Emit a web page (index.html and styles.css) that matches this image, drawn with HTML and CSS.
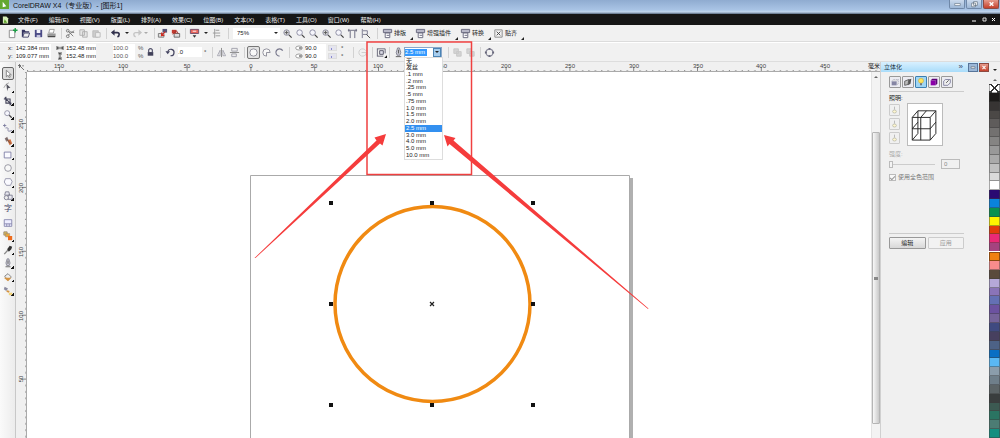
FILE: index.html
```html
<!DOCTYPE html>
<html lang="zh-CN">
<head>
<meta charset="utf-8">
<title>CorelDRAW X4（专业版）- [图形1]</title>
<link rel="stylesheet" href="styles.css">
</head>
<body>
<svg class="defs" aria-hidden="true">
  <symbol id="new" viewBox="0 0 12 12"><path d="M2.500 2.500h6v8h-6z" fill="#fff" stroke="#888" /><path d="M9 0v5M6.500 2.500h5" stroke="#1ba045" stroke-width="1.500"/></symbol>
  <symbol id="open" viewBox="0 0 12 12"><path d="M2 10V2h3l1 1.500h4V5H4L3 9.500z" fill="#353560"/><path d="M4.500 5.500h6l-1.500 4.500H3z" fill="#eee" stroke="#353560" stroke-width=".9"/></symbol>
  <symbol id="save" viewBox="0 0 12 12"><path d="M2 2h8v8H2z" fill="#4b4b86"/><path d="M4 2h4v3.500H4z" fill="#f4f4fa"/><path d="M4 7.500h4V10H4z" fill="#c5c5de"/></symbol>
  <symbol id="print" viewBox="0 0 12 12"><path d="M4 1.500h5l-1 4H3z" fill="#fff" stroke="#777" stroke-width=".7"/><path d="M1.500 6h9v3.500h-9z" fill="#999"/><path d="M2 9.500h8" stroke="#222"/></symbol>
  <symbol id="cut" viewBox="0 0 12 12"><path d="M3 3l6 6M3 8l7-5M5 4l5 1" stroke="#777"/><circle cx="3" cy="3" r="1.500" fill="none" stroke="#777"/><circle cx="3" cy="9" r="1.500" fill="none" stroke="#777"/></symbol>
  <symbol id="copy" viewBox="0 0 12 12"><path d="M2 2h5v6H2zM5 4h5v6H5z" fill="#e6e6e6" stroke="#aaa" stroke-width=".9"/></symbol>
  <symbol id="paste" viewBox="0 0 12 12"><path d="M2 3h6v7H2z" fill="#ccc" stroke="#bbb"/><path d="M5 5h5v5H5z" fill="#eee" stroke="#bbb"/></symbol>
  <symbol id="undo" viewBox="0 0 12 12"><path d="M3 5h5q2 0 2 2t-2 2.500" fill="none" stroke="#32324d" stroke-width="1.800"/><path d="M1 5l4-3.500v7z" fill="#32324d"/></symbol>
  <symbol id="redo" viewBox="0 0 12 12"><path d="M9 5H4Q2 5 2 7t2 2.500" fill="none" stroke="#c5c5c5" stroke-width="1.500"/><path d="M11 5L7 1.500v7z" fill="#c5c5c5"/></symbol>
  <symbol id="import" viewBox="0 0 12 12"><path d="M1.500 6h6v4h-6z" fill="#ddd" stroke="#777"/><path d="M6 1h5v4H6z" fill="#555577"/><path d="M9 4L5 8V5M5 8h3" stroke="#d02b22" stroke-width="1.300" fill="none"/></symbol>
  <symbol id="export" viewBox="0 0 12 12"><path d="M4.500 6h6v4h-6z" fill="#ddd" stroke="#666"/><path d="M2 2h5v4H2z" fill="#c03b30"/><path d="M3 7L7 3l2 3" stroke="#a32d28" fill="none"/></symbol>
  <symbol id="launch" viewBox="0 0 12 12"><path d="M1.500 1.500h9V6h-9z" fill="#e4635a" stroke="#6f4f6b"/><path d="M4 3.500h4" stroke="#fff"/><path d="M4 8h4l-2 2.500z" fill="#333"/></symbol>
  <symbol id="align" viewBox="0 0 12 12"><path d="M4 1v10M5 2.500h4M2 5.500h8M5 8.500h5" stroke="#999"/></symbol>
  <symbol id="mag" viewBox="0 0 12 12"><circle cx="5" cy="5" r="3" fill="#f6f6fc" stroke="#8a8aa0"/><path d="M7.500 7.500l3 3" stroke="#444" stroke-width="1.400"/></symbol>
  <symbol id="magplus" viewBox="0 0 12 12"><circle cx="5" cy="5" r="3" fill="#ddd" stroke="#8a8aa0"/><path d="M3 5h4M5 3v4" stroke="#555"/><path d="M7.500 7.500l3 3" stroke="#444" stroke-width="1.400"/></symbol>
  <symbol id="zpage" viewBox="0 0 12 12"><path d="M3.500 3v8M8.500 3v8M1 2.500h10" stroke="#66667c"/><path d="M2 1v3M10 1v3" stroke="#66667c"/></symbol>
  <symbol id="zwidth" viewBox="0 0 12 12"><path d="M2.500 1v10M3 3h5v4H3" fill="none" stroke="#77778c"/><path d="M7 7l4 4" stroke="#444"/></symbol>
  <symbol id="macro" viewBox="0 0 12 12"><path d="M1.500 1.500h9V5h-9z" fill="#b8b8c8" stroke="#66667c"/><path d="M3.500 5.500h5v5h-5z" fill="#fff" stroke="#66667c"/><path d="M5 8h3" stroke="#66667c"/></symbol>
  <symbol id="snap" viewBox="0 0 12 12"><path d="M2 2h8v8H2z" fill="none" stroke="#888"/><path d="M4 4l4 4M8 4L4 8" stroke="#444"/></symbol>
  <symbol id="hsize" viewBox="0 0 12 12"><path d="M1.500 3v6M10.500 3v6M2 6h8M4 4L2 6l2 2M8 4l2 2-2 2" fill="none" stroke="#333" stroke-width="1.300"/></symbol>
  <symbol id="vsize" viewBox="0 0 12 12"><path d="M3 1.500h6M3 10.500h6M6 2v8M4 4l2-2 2 2M4 8l2 2 2-2" fill="none" stroke="#333" stroke-width="1.300"/></symbol>
  <symbol id="lock" viewBox="0 0 12 12"><path d="M3 5.500h6v4H3z" fill="#42425a"/><path d="M4 6V3q2-2.500 4 0v3" fill="none" stroke="#55556e" stroke-width="1.300"/></symbol>
  <symbol id="rotate" viewBox="0 0 12 12"><path d="M3 5a3.500 3.500 0 1 1 3 4.500" fill="none" stroke="#444460" stroke-width="1.300"/><path d="M.5 4.500h5L3 8z" fill="#444460"/></symbol>
  <symbol id="mirrh" viewBox="0 0 12 12"><path d="M1.500 9.500l3-6v6zM10.500 9.500l-3-6v6z" fill="#eee" stroke="#a8a8b4"/><path d="M6 1v10" stroke="#888"/></symbol>
  <symbol id="mirrv" viewBox="0 0 12 12"><path d="M3 1.500h6v3H3zM3 7.500h5v3H3z" fill="#eee" stroke="#a0a0ac"/><path d="M1 6h10" stroke="#888"/></symbol>
  <symbol id="ring" viewBox="0 0 12 12"><circle cx="6" cy="6" r="4" fill="#f8f8f8" stroke="#8c8c98"/></symbol>
  <symbol id="pie" viewBox="0 0 12 12"><path d="M6 6h4a4 4 0 1 0-4 4z" fill="#f8f8f8" stroke="#8c8c98"/></symbol>
  <symbol id="arc" viewBox="0 0 12 12"><path d="M9.500 4a4 4 0 1 0-3.500 6" fill="none" stroke="#77778c" stroke-width="1.300"/></symbol>
  <symbol id="angle" viewBox="0 0 12 12"><ellipse cx="6" cy="6" rx="5" ry="3" fill="#fff" stroke="#777"/><path d="M6 6h4" stroke="#333" stroke-width="1.500"/></symbol>
  <symbol id="swap" viewBox="0 0 12 12"><path d="M9.500 4a4 4 0 1 0 0 4" fill="none" stroke="#ccc"/><path d="M5 6h5v4" fill="none" stroke="#ccc"/></symbol>
  <symbol id="wrap" viewBox="0 0 12 12"><path d="M1 2h9M1 10h7M1.500 2v8M10 2v5" stroke="#667"/><path d="M4 4h4v4H4z" fill="#dcdce8" stroke="#556"/><path d="M12 9v3H9z" fill="#111"/></symbol>
  <symbol id="pen" viewBox="0 0 12 12"><path d="M5 1h2l1.500 5-1 3h-3l-1-3z" fill="#c9c9d2" stroke="#777788" stroke-width=".9"/><path d="M3 10.500h6M6 3v4" stroke="#555"/></symbol>
  <symbol id="order" viewBox="0 0 12 12"><path d="M2 2h5v5H2zM5 5h5v5H5z" fill="#d4d4d4" stroke="#c8c8c8"/></symbol>
  <symbol id="curve" viewBox="0 0 12 12"><circle cx="6" cy="6" r="3.800" fill="none" stroke="#88889a" stroke-width="1.400"/><path d="M5 1h2v2H5zM5 9h2v2H5zM1 5h2v2H1zM9 5h2v2H9z" fill="#666679"/></symbol>
  <symbol id="pick" viewBox="0 0 12 12"><path d="M4 1.500v8l2-2 1.500 3 1.300-.8L7.300 7H10z" fill="#fff" stroke="#777"/></symbol>
  <symbol id="shape" viewBox="0 0 12 12"><path d="M1 7q2-5 6-6" fill="none" stroke="#999"/><path d="M4 2l5 5-3 .5L5 11z" fill="#55555f"/></symbol>
  <symbol id="crop" viewBox="0 0 12 12"><path d="M3.500 1v7.500H10M1 3.500h7.500V11M2 2l8 8" fill="none" stroke="#44445a" stroke-width="1.300"/></symbol>
  <symbol id="free" viewBox="0 0 12 12"><path d="M2 1v4M0 3h4M3 6q4-1 3 2t5 1" fill="none" stroke="#77779a"/></symbol>
  <symbol id="smart" viewBox="0 0 12 12"><path d="M2 3l3-2 2 4-3 2z" fill="#8a7777"/><path d="M5 5l4-1 2 5-3 2z" fill="#d06c3c"/><path d="M4 3l5 6" stroke="#555"/></symbol>
  <symbol id="rect" viewBox="0 0 12 12"><path d="M1.500 2.500h8v7h-8z" fill="#fafaff" stroke="#7777a0"/></symbol>
  <symbol id="poly" viewBox="0 0 12 12"><path d="M3 2h6l2 3.500L9 10H4L1.500 6z" fill="#fafaff" stroke="#8d8da5"/></symbol>
  <symbol id="shapes" viewBox="0 0 12 12"><path d="M3 1h4l1 4H2zM6 5h5v5H6z" fill="#e8e8f0" stroke="#77778c"/><circle cx="4" cy="8" r="2.500" fill="#eee" stroke="#77778c"/></symbol>
  <symbol id="table" viewBox="0 0 12 12"><path d="M1.500 2h9v8h-9z" fill="#eef" stroke="#8080a8"/><path d="M1.500 7h9M4.500 7v3M7.500 7v3" stroke="#8080a8"/></symbol>
  <symbol id="blend" viewBox="0 0 12 12"><path d="M1 1h4v4H1z" fill="#d8bd54" stroke="#987"/><path d="M3 3h5v4H3z" fill="#e5a53d" stroke="#987" stroke-width=".6"/><path d="M6 6h5v5H6z" fill="#ee6c1e"/></symbol>
  <symbol id="drop" viewBox="0 0 12 12"><path d="M1.500 11L6 6" stroke="#888" stroke-width="1.500"/><path d="M5 5l3-4 3 1-1 3-3 3z" fill="#333"/></symbol>
  <symbol id="fill" viewBox="0 0 12 12"><path d="M2 5l4-3 4 4-4 4z" fill="#eee" stroke="#777"/><path d="M1 7h9l-4 4z" fill="#d59442"/></symbol>
  <symbol id="ifill" viewBox="0 0 12 12"><path d="M2 1l4 2-2 3-3-2z" fill="#8c8ca0"/><path d="M5 5l3 1-1 2-3-1z" fill="#d59442"/><path d="M7 8h4v3H7z" fill="#f1d37b"/></symbol>
  <symbol id="cubeflat" viewBox="0 0 12 12"><path d="M2 5h6v5H2z" fill="#8585a3"/><path d="M2 5l2-2h6L8 5M10 3v5l-2 2" fill="#ddd" stroke="#a8a8ba" stroke-dasharray="1 1"/></symbol>
  <symbol id="cuberot" viewBox="0 0 12 12"><path d="M2 5l5-2-1 6-4 1z" fill="#bbb" stroke="#555"/><path d="M7 3l3-1-1 6-3 2z" fill="#555"/></symbol>
  <symbol id="bulb" viewBox="0 0 12 12"><circle cx="6" cy="4.500" r="3" fill="#ffe45c" stroke="#c9a83a" stroke-width=".7"/><path d="M5 7.500h2V10H5z" fill="#666"/></symbol>
  <symbol id="cubecol" viewBox="0 0 12 12"><path d="M2 4h6v6H2z" fill="#8a00a8"/><path d="M2 4l2-2h6L8 4zM10 2v6l-2 2V4z" fill="#5d0077"/></symbol>
  <symbol id="cubebev" viewBox="0 0 12 12"><path d="M2 5l2-2h6v4L7 10H2z" fill="#eee" stroke="#777799"/><path d="M5 7l3-3" stroke="#444"/></symbol>
  <symbol id="lamp" viewBox="0 0 12 12"><path d="M6 1.500v4" stroke="#aaa"/><ellipse cx="6" cy="8" rx="2.500" ry="2" fill="#fff7cf" stroke="#b5b5a4"/></symbol>
</svg>

<header class="titlebar">
  <svg class="logo" viewBox="0 0 10 10"><path d="M0 0h10v10H0z" fill="#64a830"/><path d="M3 2l4 5-4 1z" fill="#fff"/></svg>
  <h1>CorelDRAW X4（专业版）- [图形1]</h1>
  <div class="winbtns">
    <button aria-label="最小化"><svg viewBox="0 0 14 8"><path d="M4 3.500h6v2H4z" fill="#fff" stroke="#567" stroke-width=".6"/></svg></button><button aria-label="还原"><svg viewBox="0 0 14 8"><path d="M6 1.500h4v4H6zM4 3h4v4H4z" fill="#fff" stroke="#567" stroke-width=".7"/></svg></button><button class="close" aria-label="关闭"><svg viewBox="0 0 14 8"><path d="M5 2l4 4M9 2L5 6" stroke="#fff" stroke-width="1.500"/></svg></button>
  </div>
</header>

<nav class="menubar">
  <svg class="doc" viewBox="0 0 8 8"><path d="M1 0h4l2 2v6H1z" fill="#d7efb8"/><path d="M3 3l3 4H2z" fill="#5fa52b"/></svg>
  <button>文件(F)</button><button>编辑(E)</button><button>视图(V)</button><button>版面(L)</button><button>排列(A)</button><button>效果(C)</button><button>位图(B)</button><button>文本(X)</button><button>表格(T)</button><button>工具(O)</button><button>窗口(W)</button><button>帮助(H)</button>
  <svg class="docbtns" viewBox="0 0 26 8"><path d="M1 5h4" stroke="#fff"/><path d="M12 2h3v3h-3z" fill="none" stroke="#ddd"/><path d="M21 2l3 3M24 2l-3 3" stroke="#fff"/></svg>
</nav>

<div class="bar standard">
  <button class="ic" aria-label="新建"><svg><use href="#new"/></svg></button>
  <button class="ic" aria-label="打开"><svg><use href="#open"/></svg></button>
  <button class="ic" aria-label="保存"><svg><use href="#save"/></svg></button>
  <button class="ic" aria-label="打印"><svg><use href="#print"/></svg></button>
  <i class="sep"></i>
  <button class="ic" aria-label="剪切"><svg><use href="#cut"/></svg></button>
  <button class="ic" aria-label="复制"><svg><use href="#copy"/></svg></button>
  <button class="ic" aria-label="粘贴"><svg><use href="#paste"/></svg></button>
  <i class="sep"></i>
  <button class="ic" aria-label="撤消"><svg><use href="#undo"/></svg></button>
  <i class="caret"></i>
  <button class="ic" aria-label="重做"><svg><use href="#redo"/></svg></button>
  <i class="caret dim"></i>
  <i class="sep slim"></i>
  <button class="ic" aria-label="导入"><svg><use href="#import"/></svg></button>
  <button class="ic" aria-label="导出"><svg><use href="#export"/></svg></button>
  <i class="sep"></i>
  <button class="ic" aria-label="启动器"><svg><use href="#launch"/></svg></button>
  <i class="caret"></i>
  <button class="ic" aria-label="对齐"><svg><use href="#align"/></svg></button>
  <i class="sep wide"></i>
  <span class="combo zoom"><select aria-label="缩放级别"><option>75%</option></select><i class="caret"></i></span>
  <button class="ic" aria-label="放大"><svg><use href="#magplus"/></svg></button>
  <button class="ic" aria-label="缩小"><svg><use href="#mag"/></svg></button>
  <button class="ic" aria-label="缩放选定"><svg><use href="#mag"/></svg></button>
  <button class="ic" aria-label="缩放全部"><svg><use href="#magplus"/></svg></button>
  <button class="ic" aria-label="缩放页面"><svg><use href="#mag"/></svg></button>
  <button class="ic" aria-label="页宽"><svg><use href="#zpage"/></svg></button>
  <button class="ic" aria-label="页高"><svg><use href="#zwidth"/></svg></button>
  <i class="sep wide"></i>
  <button class="macro"><svg><use href="#macro"/></svg>排版<i class="corner"></i></button>
  <button class="macro"><svg><use href="#macro"/></svg>增强插件<i class="corner"></i></button>
  <button class="macro"><svg><use href="#macro"/></svg>转换<i class="corner"></i></button>
  <button class="macro"><svg><use href="#snap"/></svg>贴齐<i class="corner"></i></button>
</div>

<div class="bar property">
  <div class="pair pos">
    <label>x: <input value="142.384 mm"></label>
    <label>y: <input value="109.077 mm"></label>
  </div>
  <div class="pair size">
    <label><svg><use href="#hsize"/></svg><input value="152.48 mm" aria-label="宽度"></label>
    <label><svg><use href="#vsize"/></svg><input value="152.48 mm" aria-label="高度"></label>
  </div>
  <div class="pair scale">
    <label><input value="100.0">%</label>
    <label><input value="100.0">%</label>
  </div>
  <button class="ic" aria-label="锁定比率"><svg><use href="#lock"/></svg></button>
  <i class="sep"></i>
  <label class="rot"><svg><use href="#rotate"/></svg><input value=".0" aria-label="旋转角度">°</label>
  <i class="sep"></i>
  <button class="ic" aria-label="水平镜像"><svg><use href="#mirrh"/></svg></button>
  <button class="ic" aria-label="垂直镜像"><svg><use href="#mirrv"/></svg></button>
  <i class="sep"></i>
  <button class="ic on" aria-label="椭圆形"><svg><use href="#ring"/></svg></button>
  <button class="ic" aria-label="饼形"><svg><use href="#pie"/></svg></button>
  <button class="ic" aria-label="弧形"><svg><use href="#arc"/></svg></button>
  <i class="sep"></i>
  <div class="pair ang">
    <label><svg><use href="#angle"/></svg><input value="90.0" aria-label="起始角度"><i class="spin"></i>°</label>
    <label><svg><use href="#angle"/></svg><input value="90.0" aria-label="结束角度"><i class="spin"></i>°</label>
  </div>
  <i class="sep"></i>
  <button class="ic" aria-label="方向"><svg><use href="#swap"/></svg></button>
  <i class="sep"></i>
  <button class="ic" aria-label="文本换行"><svg><use href="#wrap"/></svg></button>
  <i class="sep slim"></i>
  <svg class="penicon"><use href="#pen"/></svg>
  <div class="combo outline">
    <input value="2.5 mm" aria-label="轮廓宽度">
    <button aria-label="展开"><i class="caret"></i></button>
    <ul class="list">
      <li>无</li><li>发丝</li><li>.1 mm</li><li>.2 mm</li><li>.25 mm</li><li>.5 mm</li><li>.75 mm</li><li>1.0 mm</li><li>1.5 mm</li><li>2.0 mm</li><li class="sel">2.5 mm</li><li>3.0 mm</li><li>4.0 mm</li><li>5.0 mm</li><li>10.0 mm</li>
    </ul>
  </div>
  <i class="sep"></i>
  <button class="ic" aria-label="到图层前面"><svg><use href="#order"/></svg></button>
  <button class="ic" aria-label="到图层后面"><svg><use href="#order"/></svg></button>
  <i class="sep"></i>
  <button class="ic" aria-label="转换为曲线"><svg><use href="#curve"/></svg></button>
</div>

<main class="work">
  <aside class="toolbox">
    <div class="tools">
    <button class="on" aria-label="挑选"><svg><use href="#pick"/></svg></button>
    <button class="fly" aria-label="形状"><svg><use href="#shape"/></svg></button>
    <button class="fly" aria-label="裁剪"><svg><use href="#crop"/></svg></button>
    <button class="fly" aria-label="缩放"><svg><use href="#mag"/></svg></button>
    <button class="fly" aria-label="手绘"><svg><use href="#free"/></svg></button>
    <button class="fly" aria-label="智能填充"><svg><use href="#smart"/></svg></button>
    <button class="fly" aria-label="矩形"><svg><use href="#rect"/></svg></button>
    <button class="fly" aria-label="椭圆"><svg><use href="#ring"/></svg></button>
    <button class="fly" aria-label="多边形"><svg><use href="#poly"/></svg></button>
    <button class="fly" aria-label="基本形状"><svg><use href="#shapes"/></svg></button>
    <button class="text">字</button>
    <button aria-label="表格"><svg><use href="#table"/></svg></button>
    <button class="fly" aria-label="调和"><svg><use href="#blend"/></svg></button>
    <button class="fly" aria-label="滴管"><svg><use href="#drop"/></svg></button>
    <button class="fly" aria-label="轮廓"><svg><use href="#pen"/></svg></button>
    <button class="fly" aria-label="填充"><svg><use href="#fill"/></svg></button>
    <button class="fly" aria-label="交互式填充"><svg><use href="#ifill"/></svg></button>
    </div>
  </aside>

  <section class="view">
    <div class="corner-box"><svg viewBox="0 0 11 10"><path d="M4 4l4 4M2 3.500h3M3.500 2v4M7 3v1.500" fill="none" stroke="#666" stroke-width=".9"/></svg></div>
    <div class="hruler">
      <svg width="1600" height="10">
        <defs><pattern id="ht" x="32" width="63.800" height="10" patternUnits="userSpaceOnUse"><path d="M.5 5v5M6.900 8v2M13.300 8v2M19.600 8v2M26 8v2M32.400 8v2M38.800 8v2M45.200 8v2M51.500 8v2M57.900 8v2" stroke="#777" stroke-width=".9"/></pattern></defs>
        <rect width="1600" height="10" fill="url(#ht)"/>
        <g class="nums"><text x="32" y="6">150</text><text x="96" y="6">100</text><text x="160" y="6">50</text><text x="224" y="6">0</text><text x="287" y="6">50</text><text x="351" y="6">100</text><text x="415" y="6">150</text><text x="479" y="6">200</text><text x="543" y="6">250</text><text x="607" y="6">300</text><text x="671" y="6">350</text><text x="734" y="6">400</text><text x="798" y="6">450</text></g>
      </svg>
      <span class="unit">毫米</span>
    </div>
    <div class="vruler">
      <svg width="11" height="1200">
        <defs><pattern id="vt" y="51" width="11" height="63.900" patternUnits="userSpaceOnUse"><path d="M6 .5h5M9 6.900h2M9 13.300h2M9 19.700h2M9 26h2M9 32.400h2M9 38.800h2M9 45.200h2M9 51.600h2M9 58h2" stroke="#777" stroke-width=".9"/></pattern></defs>
        <rect width="11" height="1200" fill="url(#vt)"/>
        <g class="nums"><text transform="translate(7 52) rotate(-90)">250</text><text transform="translate(7 116) rotate(-90)">200</text><text transform="translate(7 180) rotate(-90)">150</text><text transform="translate(7 244) rotate(-90)">100</text><text transform="translate(7 307) rotate(-90)">50</text></g>
      </svg>
    </div>
    <div class="canvas">
      <svg width="843" height="1000">
        <path d="M603 106h3v900h-3z" fill="#b0b0b0"/>
        <path d="M223.500 1000V103.500h379V1000" fill="#fff" stroke="#aaa"/>
        <circle cx="405.500" cy="232" r="97.500" fill="none" stroke="#f08a12" stroke-width="3.500"/>
        <path d="M302 129h4v4h-4zM403 129h4v4h-4zM504 129h4v4h-4zM302 230h4v4h-4zM504 230h4v4h-4zM302 331h4v4h-4zM403 331h4v4h-4zM504 331h4v4h-4z" fill="#111"/>
        <path d="M403 230l4 4M407 230l-4 4" stroke="#222" stroke-width="1.200"/>
      </svg>
    </div>
    <div class="vscroll"><i class="up"></i><i class="thumb"></i></div>
  </section>

  <aside class="docker">
    <header><h2>立体化</h2><span class="more">»</span><button aria-label="折叠"><svg viewBox="0 0 10 9"><path d="M2.500 3.500h5v2h-5z" fill="#fff" stroke="#567" stroke-width=".8"/></svg></button><button class="close" aria-label="关闭"><svg viewBox="0 0 10 9"><path d="M3 2.500l4 4M7 2.500l-4 4" stroke="#fff" stroke-width="1.300"/></svg></button></header>
    <div class="panel">
      <div class="modes">
        <button aria-label="相机"><svg><use href="#cubeflat"/></svg></button>
        <button aria-label="旋转"><svg><use href="#cuberot"/></svg></button>
        <button class="on" aria-label="光源"><svg><use href="#bulb"/></svg></button>
        <button aria-label="颜色"><svg><use href="#cubecol"/></svg></button>
        <button aria-label="斜角"><svg><use href="#cubebev"/></svg></button>
      </div>
      <hr>
      <h3>照明:</h3>
      <div class="lighting">
        <div class="lamps">
          <button aria-label="光源 1"><svg><use href="#lamp"/></svg></button>
          <button aria-label="光源 2"><svg><use href="#lamp"/></svg></button>
          <button aria-label="光源 3"><svg><use href="#lamp"/></svg></button>
        </div>
        <svg class="preview" viewBox="0 0 36 42"><path d="M4.500 13.500h19v24h-19zM10.500 6.500h19v24l-6 7M4.500 13.500l6-7M23.500 13.500l6-7M10.500 6.500v24l-6 7M13.500 13.500v24M4.500 25.500h19l6-7M13.500 13.500l6-7M10.500 18.500l-6 7" fill="none" stroke="#222"/></svg>
      </div>
      <label class="dim" for="power">强度:</label>
      <div class="power"><input type="range" id="power" min="0" max="100" value="0" disabled><input class="num" value="0" aria-label="强度值" disabled></div>
      <label class="check"><input type="checkbox" checked disabled>使用全色范围</label>
      <hr class="foot">
      <div class="actions"><button>编辑</button><button disabled>应用</button></div>
    </div>
  </aside>

  <aside class="palette">
    <div class="pal-head"><i class="caret"></i><i class="up"></i></div>
    <div class="swatches">
      <i class="none"></i><i class="c1"></i><i class="c2"></i><i class="c3"></i><i class="c4"></i><i class="c5"></i><i class="c6"></i><i class="c7"></i><i class="c8"></i><i class="c9"></i><i class="c10"></i><i class="c11"></i><i class="c12"></i><i class="c13"></i><i class="c14"></i><i class="c15"></i><i class="c16"></i><i class="c17"></i><i class="c18"></i><i class="c19"></i><i class="c20"></i><i class="c21"></i><i class="c22"></i><i class="c23"></i><i class="c24"></i><i class="c25"></i><i class="c26"></i><i class="c27"></i><i class="c28"></i><i class="c29"></i><i class="c30"></i><i class="c31"></i><i class="c32"></i><i class="c33"></i><i class="c34"></i><i class="c35"></i><i class="c36"></i><i class="c37"></i><i class="c38"></i><i class="c39"></i>
    </div>
  </aside>
</main>

<svg class="marks" width="700" height="330" aria-hidden="true">
  <rect x="367" y="42" width="104.500" height="132.500" fill="none" stroke="#f04040" stroke-width="1.500"/>
  <path d="M254.500 258L376.500 140.500L374.500 137.500L386 134L382.500 145.500L380 143.500L255.500 258z" fill="#f53c3c"/>
  <path d="M648 309L449.500 144L447.500 146.500L444 135L455.500 138L453.500 140.500L648.500 308.500z" fill="#f53c3c"/>
</svg>
</body>
</html>
```

FILE: styles.css
```css
* { box-sizing: border-box; }
html, body { height: 100%; }
body {
  margin: 0;
  display: flex;
  flex-direction: column;
  overflow: hidden;
  position: relative;
  background: #f0f0f0;
  color: #222;
  font: 6px/8px "Liberation Sans", "Noto Sans CJK SC", sans-serif;
}
button, input, select { font: inherit; color: inherit; margin: 0; padding: 0; border: 0; background: none; min-width: 0; }
button { display: flex; align-items: center; justify-content: center; flex: none; }
h1, h2, h3, ul { margin: 0; padding: 0; font: inherit; }
i { font-style: normal; flex: none; }
svg { display: block; flex: none; }
.defs { position: absolute; width: 0; height: 0; }

.titlebar { flex: none; height: 14px; display: flex; align-items: flex-start; background: linear-gradient(#8fabd0, #a9c4e5 70%, #c3d7ee 85%, #58697f); }
.titlebar h1 { margin: 1px 0 0 4px; font-size: 7px; line-height: 9px; color: #111; flex: 1; }
.logo { width: 9px; height: 9px; }
.winbtns { display: flex; gap: 1px; padding-right: 1px; }
.winbtns button { width: 16px; height: 9px; border: 1px solid #6f88a8; border-top: 0; border-radius: 0 0 2px 2px; background: linear-gradient(#cbdaed, #9db7d6); }
.winbtns svg { width: 13px; height: 8px; }
.winbtns .close, .docker .close { background: linear-gradient(#e59a8c, #c5412c); border-color: #8d4a42; }

.menubar { flex: none; height: 11px; display: flex; align-items: center; background: #161616; color: #eee; padding: 0 3px 0 2px; }
.menubar button { padding: 0 5px 0 6px; }
.doc { width: 7px; height: 8px; margin-right: 3px; }
.docbtns { width: 26px; height: 8px; margin-left: auto; }

.bar { flex: none; display: flex; align-items: center; background: #f1f1f1; }
.standard { height: 17px; padding-left: 6px; border-bottom: 1px solid #dcdcdc; }
.property { height: 20px; padding-left: 6px; border-top: 1px solid #fff; border-bottom: 1px solid #ddd; }
.bar svg { width: 11px; height: 11px; }
.ic { width: 13px; height: 13px; }
.ic.on { border: 1px solid #777; border-radius: 2px; background: #e2e2e2; }
.sep { width: 6px; height: 11px; background: linear-gradient(#d2d2d2, #d2d2d2) center / 1px 100% no-repeat; }
.sep.wide { width: 10px; }
.sep.slim { width: 3px; }
.caret { width: 9px; height: 4px; display: flex; justify-content: center; align-items: center; }
.caret::before { content: ""; border: 2px solid transparent; border-top-color: #222; border-bottom: 0; }
.caret.dim::before { border-top-color: #aaa; }
.combo { display: flex; align-items: center; background: #fff; }
.zoom { width: 47px; height: 11px; margin-right: 1px; }
.zoom select { flex: 1; appearance: none; padding-left: 4px; }
.macro { height: 13px; gap: 1px; margin-right: 2px; }
.corner { align-self: flex-end; margin-left: 3px; border-left: 3px solid transparent; border-bottom: 3px solid #222; }

.pair { display: flex; flex-direction: column; }
.pair label, .rot { display: flex; align-items: center; height: 8px; gap: 1px; }
.pair svg { width: 8px; height: 8px; }
.pair input { height: 8px; background: #fff; }
.pos { width: 48px; }
.pos label { padding-left: 2px; }
.pos input { width: 35px; margin-left: 2px; }
.size { width: 52px; }
.size label { padding-left: 2px; gap: 2px; }
.size input { width: 30px; }
.scale { width: 38px; }
.scale label { padding-left: 7px; gap: 3px; color: #555; }
.scale input { width: 22px; }
.rot { height: 10px; width: 46px; gap: 2px; padding-left: 2px; }
.rot input { width: 24px; height: 10px; background: #fff; }
.ang { width: 58px; }
.ang label { gap: 2px; padding-left: 3px; }
.ang input { width: 21px; }
.spin { width: 9px; height: 6px; margin-right: 2px; background: radial-gradient(circle, #8a8ad0 1px, #e4e4ee 1px) 0 0 / 5px 6px; border: 1px solid #ddd; }
.penicon { margin-left: 2px; }
.outline { position: relative; width: 38px; height: 11px; border: 1px solid #8aa7c8; margin-right: 3px; }
.outline input { flex: 1; width: 20px; height: 7px; background: linear-gradient(#3399ff, #3399ff) 0 0 / 22px 100% no-repeat; color: #fff; }
.outline button { width: 8px; height: 9px; background: #a6cdee; border: 1px solid #4a84b5; }
.list { position: absolute; z-index: 2; top: 9px; left: -1px; width: 39px; height: 103px; display: grid; grid-auto-rows: 1fr; background: #fff; border: 1px solid #ddd; list-style: none; }
.list li { line-height: 7px; min-height: 0; padding-left: 1px; }
.list .sel { background: #3390f0; color: #fff; }

.work { flex: 1; min-height: 0; display: flex; }
.toolbox { flex: none; width: 16px; padding: 5px 1px 0 2px; background: linear-gradient(90deg, #fafafa, #ececec); border-right: 1px solid #c8c8c8; }
.tools { height: 230px; display: flex; flex-direction: column; justify-content: space-between; }
.tools button { height: 13px; background-repeat: no-repeat; }
.tools svg { width: 10px; height: 10px; }
.tools .on { border: 1px solid #666; border-radius: 2px; background: #dedede; }
.tools .fly { background-image: linear-gradient(135deg, transparent 50%, #111 50%); background-size: 3px 3px; background-position: right bottom 1px; }
.tools .text { font-size: 8px; color: #444466; }

.view { flex: 1; min-width: 0; display: grid; grid-template: 10px minmax(0, 1fr) / 11px minmax(0, 1fr) 9px; }
.corner-box, .hruler, .vruler { background: #f0f0f0; overflow: hidden; }
.hruler { grid-column: 2 / 4; display: flex; border-bottom: 1px solid #aaa; position: relative; }
.vruler { border-right: 1px solid #aaa; }
.nums { font-size: 6px; fill: #444; text-anchor: middle; }
.unit { position: absolute; right: 0; top: 0; background: #f0f0f0; line-height: 8px; color: #111; }
.canvas { background: #fff; overflow: hidden; }
.vscroll { display: flex; flex-direction: column; align-items: center; padding-bottom: 14px; background: #f3f3f3; border-left: 1px solid #e4e4e4; }
.up { border: 2px solid transparent; border-top: 0; border-bottom-color: #666; }
.vscroll .up { margin: 4px 0 54px; }
.thumb { flex: 1; width: 8px; border: 1px solid #b5b5b5; border-radius: 1px; background: linear-gradient(#888, #888) center / 4px 3px no-repeat, linear-gradient(90deg, #f8f8f8, #c9c9c9); }

.docker { flex: none; width: 109px; border-left: 1px solid #d0d0d0; }
.docker header { display: flex; align-items: center; height: 10px; padding-left: 3px; background: linear-gradient(#d8f0ff, #a9dcfa); }
.docker h2 { flex: 1; color: #234; }
.more { font-size: 8px; margin-right: 4px; color: #346; }
.docker header button { width: 10px; height: 9px; margin-left: 1px; border: 1px solid #57759a; background: #9cb8d8; }
.docker header svg { width: 8px; height: 7px; }
.panel { padding: 4px 25px 0 8px; }
.modes { display: flex; gap: 1px; }
.modes button { width: 12px; height: 12px; border: 1px solid #999; border-radius: 1px; background: #ececf2; }
.modes svg { width: 10px; height: 10px; }
.modes .on { background: #9fd6f5; border-color: #3c7fb1; }
hr { margin: 3px 0 2px; border: 0; border-top: 1px solid #ccc; }
.lighting { display: flex; gap: 7px; margin-top: 1px; }
.lamps { display: flex; flex-direction: column; gap: 2px; padding-top: 1px; }
.lamps button { width: 11px; height: 12px; border: 1px solid #ccc; border-radius: 1px; }
.lamps svg { width: 9px; height: 10px; }
.preview { width: 36px; height: 43px; background: #fff; border: 1px solid #bbb; }
.dim { display: block; margin-top: 4px; color: #aaa; }
.power { display: flex; align-items: center; gap: 6px; margin-top: 1px; }
.power input[type=range] { appearance: none; width: 46px; height: 9px; background: linear-gradient(#ccc, #ccc) center / 100% 1px no-repeat; }
.power input[type=range]::-webkit-slider-thumb { appearance: none; width: 4px; height: 7px; border: 1px solid #bbb; background: #f4f4f4; }
.num { width: 19px; height: 10px; border: 1px solid #bbb; padding-left: 2px; color: #888; }
.check { display: flex; align-items: center; gap: 2px; margin-top: 4px; color: #777; }
.check input { appearance: none; width: 7px; height: 7px; border: 1px solid #bbb; background: #f8f8f8; display: flex; align-items: center; justify-content: center; }
.check input::before { content: ""; width: 4px; height: 2px; border: solid #999; border-width: 0 0 1px 1px; transform: rotate(-45deg); }
.foot { margin: 52px 0 3px; }
.actions { display: flex; gap: 2px; }
.actions button { flex: 1; height: 12px; border: 1px solid #999; border-radius: 1px; background: linear-gradient(#f4f4f4, #d8d8d8); }
.actions button:disabled { background: #f2f2f2; border-color: #ccc; color: #999; }

.palette { flex: none; width: 11px; display: flex; flex-direction: column; }
.pal-head { flex: none; height: 22px; display: flex; flex-direction: column; align-items: center; justify-content: space-between; padding: 6px 0 3px; }
.swatches { flex: 1; display: grid; grid-auto-rows: 1fr; }
.swatches i { border: 1px solid rgba(60, 60, 60, .45); border-top: 0; }
.none { background: linear-gradient(45deg, transparent 45%, #333 45% 55%, transparent 55%), linear-gradient(-45deg, #fff 45%, #333 45% 55%, #fff 55%); }
.c1 { background: #1c1a19; } .c2 { background: #373433; } .c3 { background: #4b4846; } .c4 { background: #5f5c5b; }
.c5 { background: #737170; } .c6 { background: #858483; } .c7 { background: #999; } .c8 { background: #aaa; }
.c9 { background: #c0c0c0; } .c10 { background: #dadada; } .c11 { background: #fff; } .c12 { background: #2a0a72; }
.c13 { background: #0a83dc; } .c14 { background: #0a9250; } .c15 { background: #fff500; } .c16 { background: #e23c0c; }
.c17 { background: #ea2a76; } .c18 { background: #a5437f; } .c19 { background: #f08010; } .c20 { background: #f98c8c; }
.c21 { background: #5a4a3c; } .c22 { background: #b5a8d8; } .c23 { background: #8a74b8; } .c24 { background: #6470b4; }
.c25 { background: #6c52a0; } .c26 { background: #75639a; } .c27 { background: #404a80; } .c28 { background: #47405f; }
.c29 { background: #4d6286; } .c30 { background: #0a6fc4; } .c31 { background: #5ab8f4; } .c32 { background: #8b9dab; }
.c33 { background: #6f7f8a; } .c34 { background: #5c6466; } .c35 { background: #3a3e3e; } .c36 { background: #3c5a52; }
.c37 { background: #2a7462; } .c38 { background: #4c7c74; } .c39 { background: #148f80; }
.swatches .c19 { border: 1px solid #8a4a10; outline: 1px solid #fff; }

.marks { position: absolute; left: 0; top: 0; z-index: 3; pointer-events: none; }
```
